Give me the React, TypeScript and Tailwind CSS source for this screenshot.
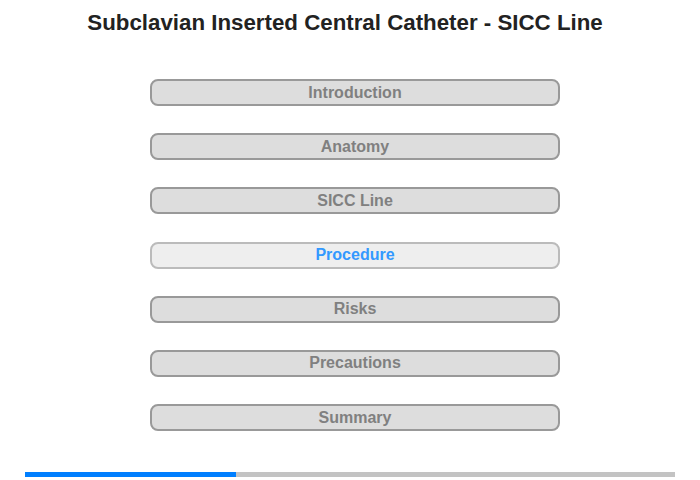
import React from "react";

const items = ["Introduction", "Anatomy", "SICC Line", "Procedure", "Risks", "Precautions", "Summary"];

export default function App() {
  return (
    <div className="w-[700px] h-[480px] bg-white flex flex-col" style={{ fontFamily: '"Liberation Sans", Arial, sans-serif' }}>
      <div className="h-[10px]" />
      <div className="pr-[10px] text-center text-[22.3px] leading-[26px] font-bold text-[#222222]">
        Subclavian Inserted Central Catheter - SICC Line
      </div>
      <div className="h-[43px]" />
      <div className="flex flex-col gap-[27.2px] pl-[150px]">
        {items.map((t) => {
          const active = t === "Procedure";
          return (
            <div
              key={t}
              className={
                active
                  ? "w-[410px] h-[27px] rounded-[8px] border-2 border-[#bbbbbb] bg-[#eeeeee] flex items-center justify-center text-[16px] font-bold text-[#3399ff]"
                  : "w-[410px] h-[27px] rounded-[8px] border-2 border-[#999999] bg-[#dddddd] flex items-center justify-center text-[16px] font-bold text-[#808080]"
              }
            >
              {t}
            </div>
          );
        })}
      </div>
      <div className="h-[41px]" />
      <div className="ml-[25px] w-[650px] h-[5px] bg-[#c3c3c3] flex">
        <div className="w-[211px] h-full bg-[#007fff]" />
      </div>
    </div>
  );
}
